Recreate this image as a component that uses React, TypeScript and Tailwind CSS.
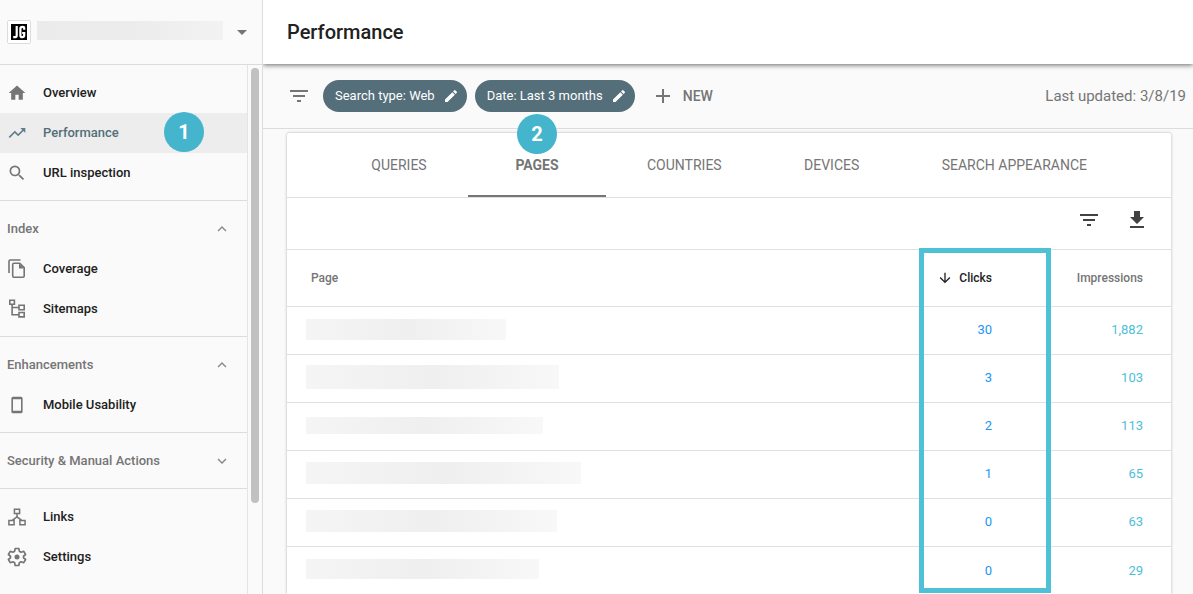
import React from "react";
import {
  MdAdd,
  MdArrowDownward,
  MdArrowDropDown,
  MdEdit,
  MdExpandLess,
  MdExpandMore,
  MdFileDownload,
  MdFilterList,
  MdHome,
  MdSearch,
  MdTrendingUp,
} from "react-icons/md";

type IconProps = { className?: string };

const CoverageIcon = ({ className }: IconProps) => (
  <svg viewBox="0 0 18 20" className={className} fill="none" stroke="currentColor" strokeWidth="1.6" aria-hidden="true">
    <path d="M1 14V2.2Q1 1 2.2 1H12.5" />
    <path d="M5.9 4.3H11.8L16.2 8.7V17Q16.2 18.2 15 18.2H5.9Q4.7 18.2 4.7 17V5.5Q4.7 4.3 5.9 4.3Z" />
    <path d="M11 4.5V9.5H16Z" fill="currentColor" stroke="none" />
  </svg>
);

const SitemapIcon = ({ className }: IconProps) => (
  <svg viewBox="0 0 18 20" className={className} fill="none" stroke="currentColor" strokeWidth="1.6" aria-hidden="true">
    <path d="M1.8 1.3H6.4V5.3H1.8Z M11 6.3H16.2V10.7H11Z M11 13.5H16.2V17.9H11Z M4.1 5.5V15.8H11 M4.1 8.5H11" />
  </svg>
);

const PhoneIcon = ({ className }: IconProps) => (
  <svg viewBox="0 0 18 20" className={className} aria-hidden="true">
    <path
      fill="currentColor"
      fillRule="evenodd"
      d="M5 1.7H13Q14.6 1.7 14.6 3.3V16.7Q14.6 18.3 13 18.3H5Q3.4 18.3 3.4 16.7V3.3Q3.4 1.7 5 1.7ZM5 4.3V15.7H13V4.3Z"
    />
  </svg>
);

const LinksIcon = ({ className }: IconProps) => (
  <svg viewBox="0 0 18 18" className={className} fill="none" stroke="currentColor" strokeWidth="1.5" aria-hidden="true">
    <path d="M6.4 1.2H11.6V5.6H6.4Z M0.9 12.4H6.1V16.8H0.9Z M11.9 12.4H17.1V16.8H11.9Z M9 5.6V8.8L4.2 12.4 M9 8.8L13.8 12.4" />
  </svg>
);

const GearIcon = ({ className }: IconProps) => (
  <svg viewBox="0 0 24 24" className={className} fill="currentColor" aria-hidden="true">
    <path
      fill="none"
      stroke="currentColor"
      strokeWidth="2"
      strokeLinejoin="round"
      d="M9.8 1.8H14.2L14.8 5L17 6.3L20.1 5.2L22.3 9L19.8 11.1V12.9L22.3 15L20.1 18.8L17 17.7L14.8 19L14.2 22.2H9.8L9.2 19L7 17.7L3.9 18.8L1.7 15L4.2 12.9V11.1L1.7 9L3.9 5.2L7 6.3L9.2 5Z"
    />
    <circle cx="12" cy="12" r="3" />
  </svg>
);

const NavItem = ({
  icon,
  label,
  active = false,
  children,
}: {
  icon: React.ReactNode;
  label: string;
  active?: boolean;
  children?: React.ReactNode;
}) => (
  <li className="relative">
    <a
      href="#"
      aria-current={active ? "page" : undefined}
      className={
        active
          ? "flex h-10 items-center gap-4 bg-[#ededed] pl-[7px] text-[#546e7a]"
          : "flex h-10 items-center gap-4 pl-[7px] text-[#212121]"
      }
    >
      <span className={active ? "flex w-5 justify-center text-[#607d8b]" : "flex w-5 justify-center text-[#757575]"}>
        {icon}
      </span>
      <span>{label}</span>
    </a>
    {children}
  </li>
);

const NavHeading = ({ label, open }: { label: string; open: boolean }) => (
  <button
    type="button"
    aria-expanded={open}
    className="flex h-10 w-full items-center justify-between pr-4 pl-[7px] text-[#757575]"
  >
    <span>{label}</span>
    {open ? <MdExpandLess className="size-[18px] text-[#8a8a8a]" /> : <MdExpandMore className="size-[18px] text-[#8a8a8a]" />}
  </button>
);

const StepBadge = ({ step }: { step: number }) => (
  <span className="flex size-10 items-center justify-center rounded-full bg-[#45b4cd] text-xl font-bold text-white">
    {step}
  </span>
);

const Chip = ({ label }: { label: string }) => (
  <button type="button" className="flex h-8 items-center gap-2 rounded-full bg-[#546e7a] pr-2 pl-3 text-[13px] text-white">
    <span>{label}</span>
    <MdEdit className="size-4" />
  </button>
);

const tabs = ["QUERIES", "PAGES", "COUNTRIES", "DEVICES", "SEARCH APPEARANCE"];

const rows = [
  { bar: "h-[21px] w-[200px]", clicks: "30", impressions: "1,882" },
  { bar: "h-6 w-[253px]", clicks: "3", impressions: "103" },
  { bar: "h-[17px] w-[237px]", clicks: "2", impressions: "113" },
  { bar: "h-[22px] w-[275px]", clicks: "1", impressions: "65" },
  { bar: "h-[22px] w-[251px]", clicks: "0", impressions: "63" },
  { bar: "h-5 w-[233px]", clicks: "0", impressions: "29" },
];

function Sidebar() {
  return (
    <aside className="flex w-[263px] shrink-0 flex-col border-r border-[#dcdcdc] bg-[#fafafa]">
      <button type="button" aria-label="Select property" className="flex h-[65px] w-full items-center border-b border-[#dcdcdc] pr-2 pl-[7px]">
        <span className="flex size-6 items-center justify-center rounded-xs border border-[#dcdcdc] bg-white">
          <svg viewBox="0 0 16 16" className="size-4 bg-black" fill="none" stroke="white" strokeWidth="2.2" aria-hidden="true">
            <path d="M5.7 2V11.5Q5.7 13.2 4.3 13.2H2.2 M13.2 5.8V4.2Q13.2 2.9 11.4 2.9Q9.4 2.9 9.4 4.6V11.4Q9.4 13.1 11.2 13.1Q13.2 13.1 13.2 11.2V9H11.2" />
          </svg>
        </span>
        <span className="mb-1 ml-1.5 h-[19px] w-[186px] bg-linear-to-r from-[#ebebeb] via-[#ececec] to-[#f2f2f2]" />
        <MdArrowDropDown className="ml-auto size-6 text-[#757575]" />
      </button>
      <div className="flex grow">
        <nav className="grow border-r border-[#e4e4e4] text-[13px] font-medium">
          <ul className="border-b border-[#dcdcdc] pt-2 pb-[7px]">
            <NavItem icon={<MdHome className="size-5" />} label="Overview" />
            <NavItem icon={<MdTrendingUp className="size-5" />} label="Performance" active>
              <div className="pointer-events-none absolute -top-px left-[164px]">
                <StepBadge step={1} />
              </div>
            </NavItem>
            <NavItem icon={<MdSearch className="size-5" />} label="URL inspection" />
          </ul>
          <div className="border-b border-[#dcdcdc] pt-2 pb-[7px]">
            <NavHeading label="Index" open />
            <ul>
              <NavItem icon={<CoverageIcon className="h-5 w-[18px]" />} label="Coverage" />
              <NavItem icon={<SitemapIcon className="h-5 w-[18px]" />} label="Sitemaps" />
            </ul>
          </div>
          <div className="border-b border-[#dcdcdc] pt-2 pb-[7px]">
            <NavHeading label="Enhancements" open />
            <ul>
              <NavItem icon={<PhoneIcon className="h-5 w-[18px]" />} label="Mobile Usability" />
            </ul>
          </div>
          <div className="border-b border-[#dcdcdc] pt-2 pb-[7px]">
            <NavHeading label="Security & Manual Actions" open={false} />
          </div>
          <ul className="pt-2">
            <NavItem icon={<LinksIcon className="size-[18px]" />} label="Links" />
            <NavItem icon={<GearIcon className="size-5" />} label="Settings" />
          </ul>
        </nav>
        <div className="w-3.5 pt-[3px] pl-[3px]">
          <div className="h-[435px] w-2 rounded-full bg-[#c1c1c1]" />
        </div>
      </div>
    </aside>
  );
}

function PagesTable() {
  return (
    <div className="relative">
      <table className="w-full table-fixed border-collapse text-[13px]">
        <thead>
          <tr className="h-14 border-b border-[#e0e0e0] text-xs font-medium text-[#757575]">
            <th scope="col" className="pl-6 text-left font-medium">
              Page
            </th>
            <th scope="col" className="w-[120px] pr-7 font-medium text-[#212121]">
              <button type="button" className="flex w-full items-center justify-end gap-1.5">
                <MdArrowDownward className="size-4" />
                <span>Clicks</span>
              </button>
            </th>
            <th scope="col" className="w-[151px] pr-7 text-right font-medium">
              Impressions
            </th>
          </tr>
        </thead>
        <tbody>
          {rows.map((row, i) => (
            <tr key={i} className="h-12 border-b border-[#e0e0e0] last:border-b-0">
              <td className="pb-0.5 pl-[19px]">
                <div className={`${row.bar} bg-linear-to-r from-[#f5f5f5] via-[#efefef] to-[#f8f8f8]`} />
              </td>
              <td className="pr-7 text-right text-[#2196f3]">{row.clicks}</td>
              <td className="pr-7 text-right text-[#4cc0d6]">{row.impressions}</td>
            </tr>
          ))}
        </tbody>
      </table>
      <div className="pointer-events-none absolute -top-0.5 right-[120px] bottom-px w-[132px] border-5 border-[#4fc1d7]" />
    </div>
  );
}

export default function App() {
  return (
    <div className="flex min-h-screen bg-[#fafafa] font-['Roboto',sans-serif]">
      <Sidebar />
      <main className="flex min-w-0 grow flex-col overflow-clip">
        <header className="relative flex h-16 items-center bg-white pl-6 shadow-[0_1px_5px_rgba(0,0,0,0.6)]">
          <h1 className="text-xl font-medium text-[#212121]">Performance</h1>
        </header>
        <div className="flex h-[65px] items-center border-b border-[#dcdcdc] pr-[7px] pl-6">
          <button type="button" aria-label="Filters" className="mr-3 text-[#757575]">
            <MdFilterList className="size-6" />
          </button>
          <div className="flex gap-2">
            <Chip label="Search type: Web" />
            <Chip label="Date: Last 3 months" />
          </div>
          <button type="button" className="ml-4 flex items-center gap-2 text-sm font-medium text-[#757575]">
            <MdAdd className="size-6" />
            <span>NEW</span>
          </button>
          <p className="ml-auto text-[15px] text-[#757575]">Last updated: 3/8/19</p>
        </div>
        <section className="mt-1 mr-[22px] ml-6 grow rounded-t-xs bg-white shadow-[0_0_3px_rgba(0,0,0,0.3)]">
          <div role="tablist" className="flex h-[65px] justify-center border-b border-[#e0e0e0] text-sm text-[#757575]">
            {tabs.map((tab) => {
              const selected = tab === "PAGES";
              return (
                <button
                  key={tab}
                  type="button"
                  role="tab"
                  aria-selected={selected}
                  className={
                    selected
                      ? "relative min-w-[138px] border-b-2 border-[#757575] px-[41px] pt-0.5 font-bold"
                      : "min-w-[138px] px-[41px]"
                  }
                >
                  {tab}
                  {selected && (
                    <span className="pointer-events-none absolute -top-[19px] left-[49px]">
                      <StepBadge step={2} />
                    </span>
                  )}
                </button>
              );
            })}
          </div>
          <div className="flex h-[52px] items-center justify-end gap-6 border-b border-[#e0e0e0] pr-[22px] pb-2 text-[#424242]">
            <button type="button" aria-label="Filter rows">
              <MdFilterList className="size-6" />
            </button>
            <button type="button" aria-label="Download">
              <MdFileDownload className="size-6" />
            </button>
          </div>
          <PagesTable />
        </section>
      </main>
    </div>
  );
}
